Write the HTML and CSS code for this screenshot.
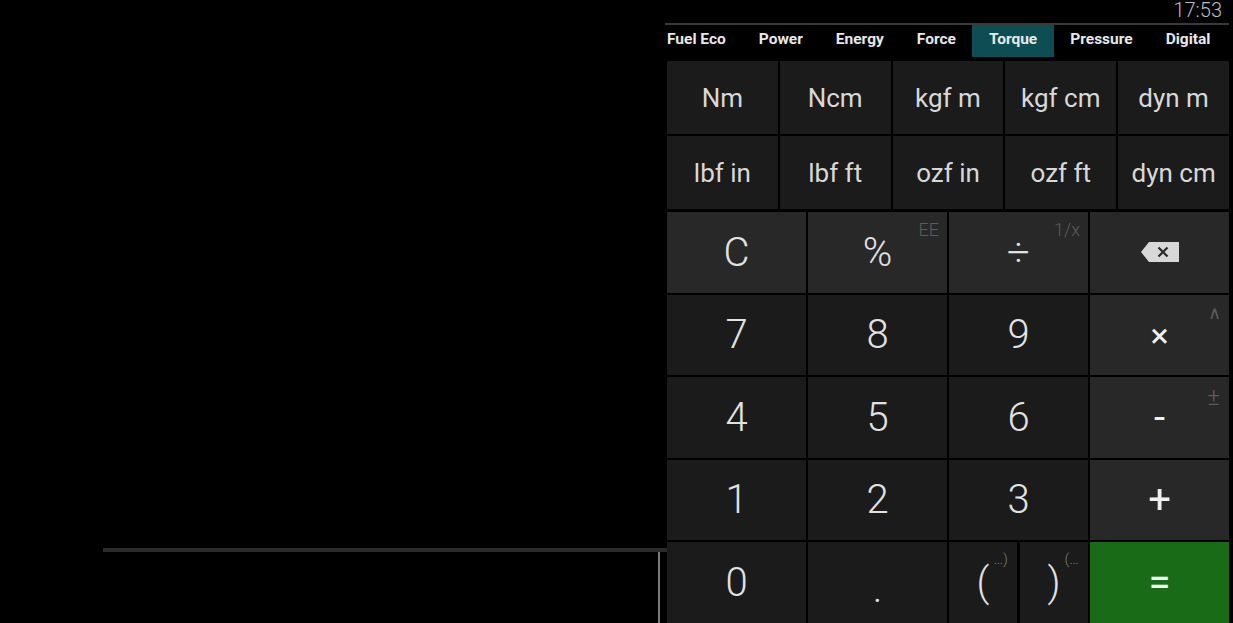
FILE: index.html
```html
<!DOCTYPE html>
<html lang="en">
<head>
    <meta charset="UTF-8">
    <meta name="viewport" content="width=device-width, initial-scale=1.0">
    <title>Unit Calculator - Torque</title>
    <link rel="stylesheet" href="styles.css">
</head>
<body>
    <div class="screen">
        <div class="display-area">
            <div class="display-input">
                <div class="cursor"></div>
            </div>
        </div>

        <div class="panel">
            <div class="status-bar">
                <span class="clock">17:53</span>
            </div>
            <div class="tab-line"></div>
            <div class="tabs">
                <div class="tab">Fuel Eco</div>
                <div class="tab">Power</div>
                <div class="tab">Energy</div>
                <div class="tab">Force</div>
                <div class="tab active">Torque</div>
                <div class="tab">Pressure</div>
                <div class="tab">Digital</div>
            </div>

            <div class="units">
                <div class="unit">Nm</div>
                <div class="unit">Ncm</div>
                <div class="unit">kgf m</div>
                <div class="unit">kgf cm</div>
                <div class="unit">dyn m</div>
                <div class="unit">lbf in</div>
                <div class="unit">lbf ft</div>
                <div class="unit">ozf in</div>
                <div class="unit">ozf ft</div>
                <div class="unit">dyn cm</div>
            </div>

            <div class="keypad">
                <div class="key fn">C</div>
                <div class="key fn">%<span class="alt">EE</span></div>
                <div class="key fn">÷<span class="alt">1/x</span></div>
                <div class="key fn">
                    <svg class="backspace" width="38" height="20" viewBox="0 0 38 20">
                        <path d="M8 0H38V20H8L0 10Z" fill="#d8d8d8"/>
                        <path d="M17.5 5.5L26.5 14.5M26.5 5.5L17.5 14.5" stroke="#2a2a2a" stroke-width="2.2"/>
                    </svg>
                </div>

                <div class="key">7</div>
                <div class="key">8</div>
                <div class="key">9</div>
                <div class="key op"><span class="times">×</span><span class="alt">∧</span></div>

                <div class="key">4</div>
                <div class="key">5</div>
                <div class="key">6</div>
                <div class="key op">-<span class="alt big">±</span></div>

                <div class="key">1</div>
                <div class="key">2</div>
                <div class="key">3</div>
                <div class="key op">+</div>

                <div class="key">0</div>
                <div class="key dot">.</div>
                <div class="parens">
                    <div class="key">(<span class="alt small">…)</span></div>
                    <div class="key">)<span class="alt small">(…</span></div>
                </div>
                <div class="key op equals">=</div>
            </div>
        </div>
    </div>
</body>
</html>
```

FILE: styles.css
```css
body {
    margin: 0;
    background-color: #000;
    font-family: Roboto, "Noto Sans", sans-serif;
    overflow: hidden;
}
.screen {
    display: flex;
    height: 623px;
}

/* left side: empty display with input line */
.display-area {
    width: 667px;
    display: flex;
    flex-direction: column;
    justify-content: flex-end;
}
.display-input {
    margin-left: 103px;
    height: 71px;
    border-top: 4px solid #2b2b2b;
    display: flex;
    justify-content: flex-end;
    padding-right: 7px;
}
.cursor {
    width: 2px;
    background-color: #7a7a7a;
}

/* right side */
.panel {
    width: 562px;
}
.status-bar {
    height: 23px;
    display: flex;
    justify-content: flex-end;
    padding-right: 7px;
}
.clock {
    font-size: 20px;
    font-weight: 300;
    line-height: 20px;
    color: #bdbdbd;
}
.tab-line {
    height: 2px;
    margin-left: -2px;
    background-color: #3a3a3a;
}
.tabs {
    display: flex;
    height: 32px;
    overflow: hidden;
    white-space: nowrap;
}
.tab {
    flex: none;
    padding: 0 16.5px 4px;
    line-height: 28px;
    font-size: 15.5px;
    font-weight: 700;
    color: #e8e8e8;
}
.tab:first-child {
    padding-left: 0;
}
.tab.active {
    background-color: #0c4e53;
}

.units {
    margin-top: 4px;
    display: grid;
    grid-template-columns: repeat(5, 1fr);
    grid-auto-rows: 73px;
    gap: 2px;
}
.unit {
    background-color: #1b1b1b;
    display: flex;
    align-items: center;
    justify-content: center;
    font-size: 26px;
    color: #d8d8d8;
}

.keypad {
    margin-top: 3px;
    display: grid;
    grid-template-columns: repeat(4, 1fr);
    grid-template-rows: repeat(5, 80.5px);
    gap: 2px;
}
.key {
    position: relative;
    background-color: #1b1b1b;
    display: flex;
    align-items: center;
    justify-content: center;
    font-size: 40px;
    font-weight: 300;
    color: #e2e2e2;
}
.key.fn,
.key.op {
    background-color: #282828;
}
.key.op {
    font-weight: 400;
    color: #f0f0f0;
}
.key.equals {
    background-color: #1a6b18;
}
.key.dot {
    padding-top: 12px;
}
.times {
    font-size: 34px;
}
.parens {
    display: flex;
    gap: 3px;
}
.parens .key {
    flex: 1;
}
.alt {
    position: absolute;
    top: 9px;
    right: 8px;
    font-size: 18px;
    font-weight: 300;
    line-height: 18px;
    color: #5c5c5c;
}
.alt.big {
    top: 11px;
    right: 9px;
    font-size: 24px;
}
.alt.small {
    top: 8px;
    right: 9px;
    font-size: 15px;
    color: #777;
}
```
